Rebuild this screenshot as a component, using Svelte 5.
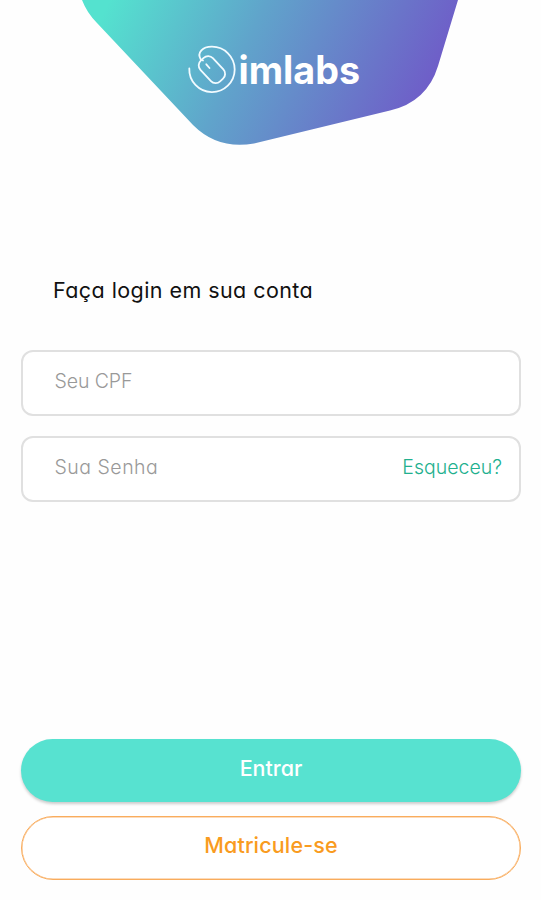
<script>
  let cpf = $state('');
  let password = $state('');
</script>

<main>
  <header>
    <svg width="541" height="160" viewBox="0 0 541 160" role="img" aria-label="imlabs">
      <defs>
        <linearGradient id="brand" gradientUnits="userSpaceOnUse" x1="112" y1="-5" x2="410" y2="138">
          <stop offset="0" stop-color="#54e2cf" />
          <stop offset="0.43" stop-color="#60a4cb" />
          <stop offset="1" stop-color="#6f5cc8" />
        </linearGradient>
      </defs>
      <path class="shape" d="M82 0Q87 13 97 23L193 125Q218 150 254 143.5L390 110.500Q427 102 438 66L458 0Z" />
      <g class="mouse">
        <path d="M189.300 68.500A22.700 22.700 0 1 0 211.700 46.700C203 46.700 196.500 52.500 200.800 59.500L203 60.500" />
        <rect x="-14.200" y="-8.500" width="28.400" height="17" rx="6.500" transform="translate(211.900 69.600) rotate(47)" />
        <path d="M206.300 64.300L209.500 68" />
      </g>
      <text x="238.500" y="84" textLength="121.500" lengthAdjust="spacingAndGlyphs">imlabs</text>
    </svg>
  </header>

  <form onsubmit={(e) => e.preventDefault()}>
    <h1>Faça login em sua conta</h1>
    <div class="field">
      <input class="cpf" type="text" placeholder="Seu CPF" aria-label="Seu CPF" bind:value={cpf} />
    </div>
    <div class="field">
      <input class="password" type="password" placeholder="Sua Senha" aria-label="Sua Senha" bind:value={password} />
      <button class="forgot" type="button"><span>Esqueceu?</span></button>
    </div>
    <div class="actions">
      <button class="primary" type="submit"><span>Entrar</span></button>
      <button class="secondary" type="button"><span>Matricule-se</span></button>
    </div>
  </form>
</main>

<style>
  :global(body) {
    background: #fefefe;
  }
  main {
    box-sizing: border-box;
    width: 541px;
    height: 900px;
    overflow: hidden;
    background: #fefefe;
    font-family: Inter, 'Open Sans', sans-serif;
    display: flex;
    flex-direction: column;
  }
  header {
    height: 160px;
  }
  svg {
    display: block;
  }
  .shape {
    fill: url(#brand);
  }
  .mouse {
    fill: none;
    stroke: #f2fbff;
    stroke-width: 1.8;
    stroke-linecap: round;
    stroke-linejoin: round;
  }
  svg text {
    fill: #fff;
    font-family: Inter, sans-serif;
    font-size: 39px;
    font-weight: 700;
    font-kerning: normal;
  }
  form {
    flex: 1;
    display: flex;
    flex-direction: column;
    padding: 115px 20px 20px 21px;
  }
  h1,
  input,
  button {
    font-feature-settings: 'cv11';
  }
  h1 {
    margin: 0 0 45px 32px;
    height: 30px;
    line-height: 30px;
    font-size: 21.500px;
    font-weight: 400;
    color: #111;
    white-space: nowrap;
    letter-spacing: 0.430px;
  }
  .field {
    box-sizing: border-box;
    display: flex;
    align-items: center;
    height: 66px;
    margin: 0 0 20px;
    padding: 0 17px 5px 31.500px;
    border: 2px solid #e0e0e0;
    border-radius: 12px;
    background: #fff;
  }
  input {
    flex: 1;
    min-width: 0;
    height: 40px;
    padding: 0;
    border: 0;
    outline: 0;
    background: transparent;
    font-family: Inter, sans-serif;
    font-size: 19.500px;
    font-weight: 300;
    color: #333;
  }
  .cpf {
    letter-spacing: -0.100px;
  }
  .password {
    letter-spacing: 0.500px;
  }
  input::placeholder {
    color: #999;
    opacity: 1;
  }
  button {
    margin: 0;
    font-family: inherit;
    cursor: pointer;
  }
  .forgot {
    padding: 0;
    border: 0;
    background: none;
    color: #22b08e;
    font-size: 19.500px;
    font-weight: 300;
  }
  .actions {
    margin-top: auto;
    display: flex;
    flex-direction: column;
    gap: 14px;
  }
  .primary,
  .secondary {
    box-sizing: border-box;
    height: 64px;
    padding: 0 0 5px;
    border-radius: 32px;
    font-size: 21.500px;
    font-weight: 500;
  }
  .primary {
    height: 63px;
    border: 0;
    background: #57e2d0;
    color: #fff;
    box-shadow: 0 2px 3px rgba(0, 0, 0, 0.2);
  }
  .secondary {
    padding-bottom: 6px;
    border: 1px solid #f9ac5c;
    box-shadow: inset 0 0 0 0.500px #f9b878;
    background: #fff;
    color: #f99b20;
    letter-spacing: 0.150px;
  }
</style>
